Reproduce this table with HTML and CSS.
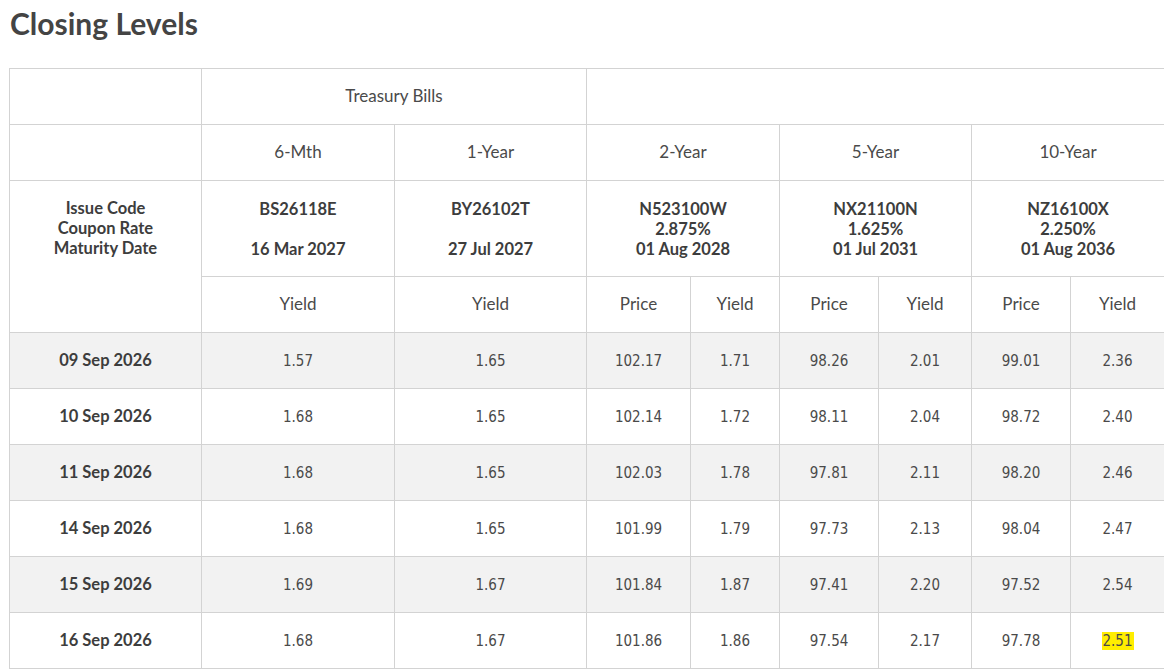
FILE: index.html
```html
<!DOCTYPE html>
<html>
<head>
<meta charset="utf-8">
<link rel="stylesheet" href="styles.css">
</head>
<body>
<div class="page">
  <h1 class="title">Closing Levels</h1>
  <table class="levels">
    <colgroup>
      <col class="c-date">
      <col class="c-bill6">
      <col class="c-bill1">
      <col class="c-p2">
      <col class="c-y2">
      <col class="c-p5">
      <col class="c-y5">
      <col class="c-p10">
      <col class="c-y10">
    </colgroup>
    <thead>
      <tr class="hrow">
        <th></th>
        <th colspan="2">Treasury Bills</th>
        <th colspan="6"></th>
      </tr>
      <tr class="hrow">
        <th></th>
        <th>6-Mth</th>
        <th>1-Year</th>
        <th colspan="2">2-Year</th>
        <th colspan="2">5-Year</th>
        <th colspan="2">10-Year</th>
      </tr>
      <tr class="issue">
        <th rowspan="2" class="issue-label">Issue Code<br>Coupon Rate<br>Maturity Date</th>
        <th>BS26118E<br>&nbsp;<br>16 Mar 2027</th>
        <th>BY26102T<br>&nbsp;<br>27 Jul 2027</th>
        <th colspan="2">N523100W<br>2.875%<br>01 Aug 2028</th>
        <th colspan="2">NX21100N<br>1.625%<br>01 Jul 2031</th>
        <th colspan="2">NZ16100X<br>2.250%<br>01 Aug 2036</th>
      </tr>
      <tr class="hrow">
        <th>Yield</th>
        <th>Yield</th>
        <th>Price</th>
        <th>Yield</th>
        <th>Price</th>
        <th>Yield</th>
        <th>Price</th>
        <th>Yield</th>
      </tr>
    </thead>
    <tbody>
      <tr><th>09 Sep 2026</th><td>1.57</td><td>1.65</td><td>102.17</td><td>1.71</td><td>98.26</td><td>2.01</td><td>99.01</td><td>2.36</td></tr>
      <tr><th>10 Sep 2026</th><td>1.68</td><td>1.65</td><td>102.14</td><td>1.72</td><td>98.11</td><td>2.04</td><td>98.72</td><td>2.40</td></tr>
      <tr><th>11 Sep 2026</th><td>1.68</td><td>1.65</td><td>102.03</td><td>1.78</td><td>97.81</td><td>2.11</td><td>98.20</td><td>2.46</td></tr>
      <tr><th>14 Sep 2026</th><td>1.68</td><td>1.65</td><td>101.99</td><td>1.79</td><td>97.73</td><td>2.13</td><td>98.04</td><td>2.47</td></tr>
      <tr><th>15 Sep 2026</th><td>1.69</td><td>1.67</td><td>101.84</td><td>1.87</td><td>97.41</td><td>2.20</td><td>97.52</td><td>2.54</td></tr>
      <tr><th>16 Sep 2026</th><td>1.68</td><td>1.67</td><td>101.86</td><td>1.86</td><td>97.54</td><td>2.17</td><td>97.78</td><td><span class="hl">2.51</span></td></tr>
    </tbody>
  </table>
</div>
</body>
</html>
```

FILE: styles.css
```css
html, body {
  margin: 0;
  padding: 0;
  background: #ffffff;
}
.page {
  padding: 0 0 0 9px;
  width: 1160px;
  color: #4a4a4a;
  font-family: Lato, "Open Sans", sans-serif;
}
.title {
  margin: 0;
  padding: 5px 0 0 1px;
  height: 68px;
  box-sizing: border-box;
  font-size: 30px;
  line-height: 36px;
  font-weight: 700;
  color: #444444;
}
.levels {
  border-collapse: collapse;
  table-layout: fixed;
  width: 1156px;
}
.c-date { width: 192px; }
.c-bill6 { width: 193px; }
.c-bill1 { width: 192px; }
.c-p2 { width: 104px; }
.c-y2 { width: 89px; }
.c-p5 { width: 99px; }
.c-y5 { width: 93px; }
.c-p10 { width: 99px; }
.c-y10 { width: 94px; }
.levels th,
.levels td {
  border: 1px solid #d3d3d3;
  text-align: center;
  vertical-align: middle;
  padding: 0;
  height: 56px;
  box-sizing: border-box;
}
.levels thead th {
  font-weight: 400;
  font-size: 17px;
  color: #4a4a4a;
}
.levels .hrow th {
  padding-bottom: 2px;
}
.levels .issue th {
  height: 96px;
  font-weight: 700;
  line-height: 20px;
  font-size: 16.5px;
  color: #3d3d3d;
}
.levels .issue th.issue-label {
  vertical-align: top;
  padding-top: 17px;
}
.levels tbody th {
  font-weight: 700;
  font-size: 16.5px;
  color: #3d3d3d;
  padding-bottom: 1px;
}
.levels td {
  font-family: "DejaVu Sans Condensed", "DejaVu Sans", sans-serif;
  font-size: 15px;
  color: #4a4a4a;
}
.levels tbody tr:nth-child(odd) th,
.levels tbody tr:nth-child(odd) td {
  background: #f2f2f2;
}
.hl {
  background: #ffee00;
  padding: 0 1px;
}
```
